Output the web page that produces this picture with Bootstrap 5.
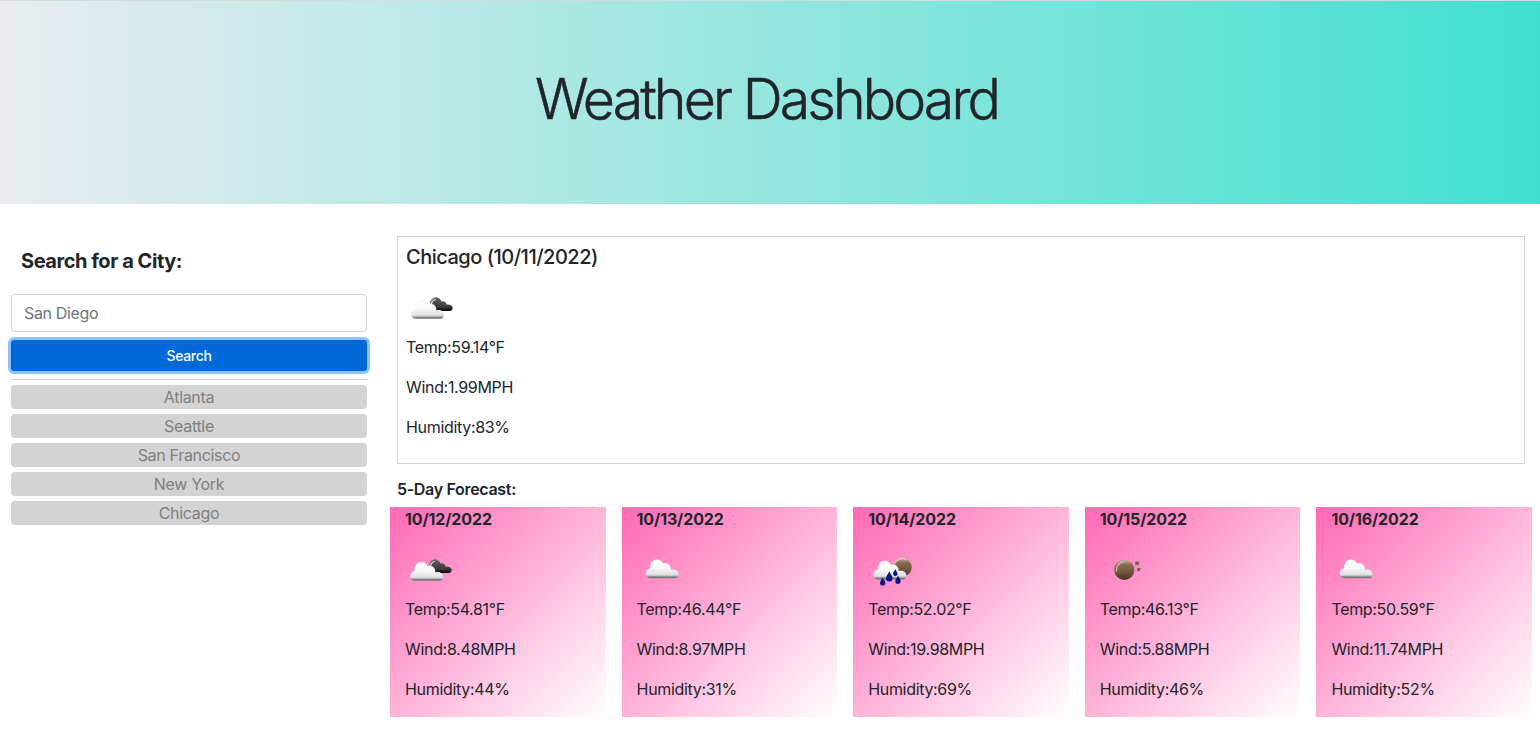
<!DOCTYPE html>
<html lang="en">
<head>
<meta charset="utf-8">
<meta name="viewport" content="width=device-width, initial-scale=1">
<title>Weather Dashboard</title>
<link href="https://cdn.jsdelivr.net/npm/bootstrap@5.3.0/dist/css/bootstrap.min.css" rel="stylesheet">
<style>
  body { font-family: Inter, "Liberation Sans", sans-serif; color: #212529; letter-spacing: -.32px; }
  .hero { height: 204px; padding: 64px 7px 0 0; border-top: 1px solid #d3dcdc; background: linear-gradient(90deg, #e9ecef, #40e0d0); }
  .hero h1 { font-size: 55.5px; font-weight: 300; line-height: 67px; letter-spacing: -2.9px; -webkit-text-stroke: .5px #212529; }
  .search-col { padding: 45px 18px 0 11px; }
  .search-col h2 { font-size: 20px; font-weight: 700; line-height: 24px; letter-spacing: -.45px; margin: 0 0 21px 10px; }
  .search-col .form-control { height: 38px; border-color: #ced4da; border-radius: 4px; letter-spacing: -.35px; }
  .search-col .form-control::placeholder { color: #6c757d; }
  .btn-search { height: 31px; margin-top: 8px; padding: 0; font-size: 14px; font-weight: 500; line-height: 31px; border: 0; border-radius: 3px; color: #fff; background: #0069d9; box-shadow: 0 0 0 3px #8fc3ff; letter-spacing: -.35px; }
  .rule { height: 1px; margin: 8px 0 5px; background: #d3d3d3; }
  .city { height: 24px; line-height: 24px; margin-bottom: 5px; border-radius: 4px; background: #d3d3d3; color: #808080; }
  .today { height: 228px; margin: 32px 15px 0 12px; padding: 8px; border: 1px solid #d3d3d3; }
  .today h2 { font-size: 20px; font-weight: 500; line-height: 24px; letter-spacing: -.5px; margin-bottom: 14px; }
  .wx { display: block; width: 50px; height: 50px; margin-bottom: 2px; }
  .forecast-title { font-size: 16px; font-weight: 600; line-height: 19px; margin: 16px 0 8px 12px; }
  .forecast { display: grid; grid-template-columns: repeat(5, 1fr); gap: 16px; margin: 0 8px 0 5px; }
  .day { height: 210px; padding: 0 15px; background: linear-gradient(135deg, #ff69b4, #fff); }
  .day h3 { font-size: 16px; font-weight: 700; line-height: 24px; letter-spacing: -.12px; margin-bottom: 14px; }
</style>
</head>
<body>
<svg width="0" height="0" class="position-absolute" aria-hidden="true">
  <defs>
    <linearGradient id="light" x1="0" y1="0" x2="0" y2="1"><stop offset="0" stop-color="#f4f4f4"/><stop offset=".2" stop-color="#fff"/><stop offset=".45" stop-color="#f8f8f8"/><stop offset=".8" stop-color="#e2e2e2"/><stop offset=".87" stop-color="#c0c0c0"/><stop offset=".94" stop-color="#777"/><stop offset="1" stop-color="#777"/></linearGradient>
    <linearGradient id="dark" x1="0" y1="0" x2="0" y2="1"><stop offset="0" stop-color="#5c5c5c"/><stop offset=".7" stop-color="#3c3c3c"/><stop offset=".9" stop-color="#151515"/><stop offset="1" stop-color="#000"/></linearGradient>
    <linearGradient id="moon" x1="0" y1="0" x2="0" y2="1"><stop offset="0" stop-color="#c4b5a6"/><stop offset=".25" stop-color="#8a6c55"/><stop offset=".6" stop-color="#765840"/><stop offset="1" stop-color="#4a3222"/></linearGradient>
    <path id="cloud" d="M9.800 35.800C7.200 35.800 5.300 33.700 5.300 31.200C5.300 28.500 6.900 26.300 9.700 25.800C9.400 21 12 17 16.300 17C19.300 17 21.600 18.600 22.400 21.100C26.800 19.800 30.500 22.500 30.400 27.400C34.200 26.200 38.100 28.500 38.100 31.800C38.100 34.300 36.700 35.800 34.500 35.800Z"/>
    <path id="back" d="M27 28Q24 21 26 17Q28 14.300 31.500 14.800Q34.500 15.500 35.500 18.500Q39.200 17.600 40.600 21.500Q45.500 21 46.700 24.600Q46.800 28 43.500 28Z"/>
    <path id="drop" d="M0-4.500C.6-2.300 2.800-.7 2.800 1.500A2.800 2.800 0 0 1-2.800 1.500C-2.800-.7-.6-2.300 0-4.500Z"/>
    <symbol id="broken" viewBox="0 0 50 50">
      <use href="#back" fill="url(#dark)"/>
      <path d="M24.200 20.600Q25 15.600 29.500 14.800Q31.500 14.600 33 16" fill="none" stroke="#777" stroke-width="1.100"/>
      <path d="M25.500 21Q26.300 17 29.800 16.500" fill="none" stroke="#ddd" stroke-width="1.200"/>
      <use href="#cloud" fill="url(#light)"/>
    </symbol>
    <symbol id="cloudy" viewBox="0 0 50 50"><use href="#cloud" x="3.500" y="-2.600" fill="url(#light)"/></symbol>
    <symbol id="rain" viewBox="0 0 50 50">
      <circle cx="34.500" cy="22.200" r="9.200" fill="url(#moon)"/>
      <path d="M26.200 19.500A9 9 0 0 1 38 14.200" fill="none" stroke="#d9cec3" stroke-width="1.200"/>
      <use href="#cloud" x=".300" y="-1.300" fill="url(#light)"/>
      <g fill="#00138c"><use href="#drop" transform="translate(14.700 36.500) scale(.95)"/><use href="#drop" transform="translate(21.300 31.500) scale(1.150)"/><use href="#drop" transform="translate(27.300 27.500) scale(.8)"/><use href="#drop" transform="translate(30 34.700) scale(.95)"/></g>
    </symbol>
    <symbol id="clear" viewBox="0 0 50 50">
      <circle cx="24.300" cy="24.800" r="10.100" fill="url(#moon)"/>
      <path d="M16.300 26.500Q16 18 24.500 16.300" fill="none" stroke="#c5b5a6" stroke-width="1.500"/>
      <path id="star" d="M35 17.200h1.500l.5-.9.600.9h1.700l-1 1.200.2 1.700-1.500-.6-1.400.6.200-1.700z" fill="#76513e" stroke="#76513e" stroke-width=".500"/>
      <use href="#star" transform="translate(8.300 9.400) scale(.82)"/>
    </symbol>
  </defs>
</svg>

<header class="hero text-center"><h1 class="m-0">Weather Dashboard</h1></header>

<div class="row g-0">
  <aside class="col-3 search-col">
    <h2>Search for a City:</h2>
    <input class="form-control" type="text" placeholder="San Diego" aria-label="City">
    <button class="btn btn-search w-100 d-block" type="button">Search</button>
    <div class="rule"></div>
    <div class="city text-center">Atlanta</div>
    <div class="city text-center">Seattle</div>
    <div class="city text-center">San Francisco</div>
    <div class="city text-center">New York</div>
    <div class="city text-center">Chicago</div>
  </aside>
  <main class="col-9">
    <section class="today">
      <h2>Chicago (10/11/2022)</h2>
      <svg class="wx"><use href="#broken"/></svg>
      <p>Temp:59.14°F</p><p>Wind:1.99MPH</p><p>Humidity:83%</p>
    </section>
    <h2 class="forecast-title">5-Day Forecast:</h2>
    <section class="forecast">
      <div class="day"><h3>10/12/2022</h3><svg class="wx"><use href="#broken"/></svg><p>Temp:54.81°F</p><p>Wind:8.48MPH</p><p>Humidity:44%</p></div>
      <div class="day"><h3>10/13/2022</h3><svg class="wx"><use href="#cloudy"/></svg><p>Temp:46.44°F</p><p>Wind:8.97MPH</p><p>Humidity:31%</p></div>
      <div class="day"><h3>10/14/2022</h3><svg class="wx"><use href="#rain"/></svg><p>Temp:52.02°F</p><p>Wind:19.98MPH</p><p>Humidity:69%</p></div>
      <div class="day"><h3>10/15/2022</h3><svg class="wx"><use href="#clear"/></svg><p>Temp:46.13°F</p><p>Wind:5.88MPH</p><p>Humidity:46%</p></div>
      <div class="day"><h3>10/16/2022</h3><svg class="wx"><use href="#cloudy"/></svg><p>Temp:50.59°F</p><p>Wind:11.74MPH</p><p>Humidity:52%</p></div>
    </section>
  </main>
</div>
<script src="https://cdn.jsdelivr.net/npm/bootstrap@5.3.0/dist/js/bootstrap.bundle.min.js"></script>
</body>
</html>
